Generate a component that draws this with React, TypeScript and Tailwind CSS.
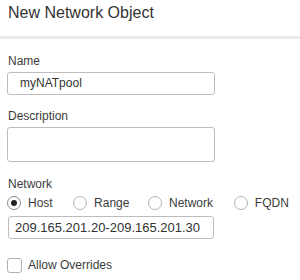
const Radio = ({ label, checked, width }: { label: string; checked?: boolean; width: string }) => (
  <div className={`flex items-center gap-[7px] ${width}`}>
    <span
      className={`flex h-[14px] w-[14px] items-center justify-center rounded-full border ${
        checked ? 'border-[#8a8a8a]' : 'border-[#b5b5b5]'
      }`}
    >
      {checked && <span className="h-[6px] w-[6px] rounded-full bg-[#222]" />}
    </span>
    <span className="text-[12px] leading-[16px] text-[#3c3c3c]">{label}</span>
  </div>
);

const App = () => {
  return (
    <div className="h-[280px] w-[300px] overflow-hidden bg-white font-['Liberation_Sans',Arial,sans-serif] text-[#3c3c3c]">
      <div className="h-[36px] px-[8px] pt-[3px]">
        <h1 className="text-[16px] leading-[20px] text-[#333]">New Network Object</h1>
      </div>
      <div className="h-[3px] bg-[#ececec]" />

      <div className="flex flex-col px-[7px]">
        <label className="mt-[14px] pl-[1px] text-[12px] leading-[16px]">Name</label>
        <div className="mt-[3px] flex h-[23px] w-[208px] items-center rounded-[3px] border border-[#bdbdbd] pb-[2px] pl-[12px] text-[12px] text-[#333]">
          myNATpool
        </div>

        <label className="mt-[13px] pl-[1px] text-[12px] leading-[16px]">Description</label>
        <div className="mt-[3px] h-[35px] w-[208px] rounded-[3px] border border-[#bdbdbd]" />

        <label className="mt-[14px] pl-[1px] text-[12px] leading-[16px]">Network</label>
        <div className="mt-[3px] flex h-[15px] items-center">
          <Radio label="Host" checked width="w-[67px]" />
          <Radio label="Range" width="w-[76px]" />
          <Radio label="Network" width="w-[87px]" />
          <Radio label="FQDN" width="w-[60px]" />
        </div>

        <div className="mt-[6px] ml-[1px] flex h-[23px] w-[206px] items-center rounded-[3px] border border-[#bdbdbd] pl-[6px] text-[13px] text-[#333]">
          209.165.201.20-209.165.201.30
        </div>

        <div className="mt-[18px] flex items-center gap-[6px]">
          <span className="h-[15px] w-[15px] rounded-[3px] border border-[#b0b0b0]" />
          <span className="text-[12px] leading-[16px]">Allow Overrides</span>
        </div>
      </div>
    </div>
  );
};

export default App;
